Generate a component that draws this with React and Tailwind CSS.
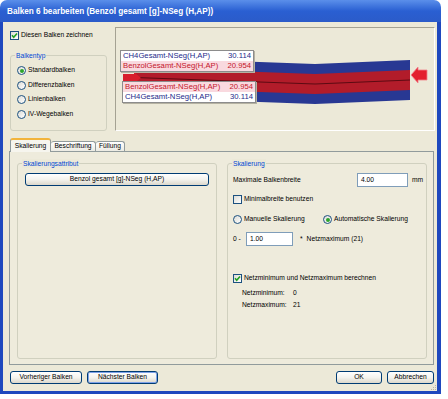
import React from 'react'

const font = "font-['Liberation_Sans',Arial,sans-serif]"

function Check({ checked }) {
  return (
    <span className="w-[9px] h-[9px] border border-[#1C5180] bg-linear-to-br from-[#DCDCD7] to-white flex items-center justify-center shrink-0">
      {checked && (
        <svg width="7" height="7" viewBox="0 0 7 7">
          <path d="M1 3.3 L2.7 5.2 L6 1.4" stroke="#21A121" strokeWidth="1.6" fill="none" />
        </svg>
      )}
    </span>
  )
}

function Radio({ checked }) {
  return (
    <span className="w-[9px] h-[9px] rounded-full border border-[#1C5180] bg-linear-to-br from-[#DCDCD7] to-white flex items-center justify-center shrink-0">
      {checked && <span className="w-[4px] h-[4px] rounded-full bg-[#2CA52C]" />}
    </span>
  )
}

function Group({ label, className = '', children }) {
  return (
    <div className={`relative border border-[#D0D0BF] rounded-[3px] ${className}`}>
      <span className="absolute top-[-5px] left-[4px] px-[1px] bg-[#ECE9D8] text-[#0046D5] leading-[9px]">{label}</span>
      {children}
    </div>
  )
}

function Button({ children, width, isDefault }) {
  return (
    <div
      className={`${width} h-[13px] rounded-[3px] border border-[#003C74] bg-linear-to-b from-white via-[#F4F3EE] to-[#DCD8CC] flex items-center justify-center leading-none ${
        isDefault ? 'shadow-[inset_0_0_0_1px_#7FA2E8]' : ''
      }`}
    >
      {children}
    </div>
  )
}

function RadioRow({ checked, children }) {
  return (
    <div className="flex items-center gap-[2px] h-[9px] leading-none">
      <Radio checked={checked} />
      <span>{children}</span>
    </div>
  )
}

function Label({ className, rows }) {
  return (
    <div className={`absolute w-[134px] h-[22px] border border-[#8C8C8C] bg-white shadow-[1px_1px_0_#B5B2A2] ${className}`}>
      {rows.map((r, i) => (
        <div
          key={i}
          className={`h-[10px] flex items-center justify-between px-[2px] text-[7.7px] leading-none ${
            r.red ? 'bg-[#F9D9DF] text-[#C4162A]' : 'text-[#1C2A8A]'
          }`}
        >
          <span>{r.name}</span>
          <span>{r.value}</span>
        </div>
      ))}
    </div>
  )
}

function Preview() {
  return (
    <div className="relative mt-[5px] w-[320px] h-[104px] border-t border-l border-[#A5A293] border-b-white border-r-white border-b border-r bg-[#ECE9D8] overflow-hidden">
      <svg className="absolute left-0 top-0" width="320" height="104" viewBox="0 0 320 104">
        <polygon points="19,29.5 199,36 294,32 294,72 199,76 19,69.5" fill="#283893" />
        <polygon points="19,39.5 199,46 294,42 294,62 199,66 19,59.5" fill="#B21C2A" />
        <polyline points="19,49.5 199,56 294,52" fill="none" stroke="#5C0A12" strokeWidth="1" />
        <polygon points="295,47 302,39 302,42 311,42 311,52 302,52 302,55" fill="#E3202E" stroke="#F3808C" strokeWidth="0.8" />
        <polygon points="7,46 18,46 18,44 25,50 18,55 18,54 7,54" fill="#D81E2C" />
      </svg>
      <Label
        className="left-[4px] top-[22px]"
        rows={[
          { name: 'CH4Gesamt-NSeg(H,AP)', value: '30.114' },
          { name: 'BenzolGesamt-NSeg(H,AP)', value: '20.954', red: true },
        ]}
      />
      <Label
        className="left-[6px] top-[53px]"
        rows={[
          { name: 'BenzolGesamt-NSeg(H,AP)', value: '20.954', red: true },
          { name: 'CH4Gesamt-NSeg(H,AP)', value: '30.114' },
        ]}
      />
    </div>
  )
}

export default function App() {
  return (
    <div className={`w-[448px] h-[399px] bg-white ${font} text-[6.7px] text-black`}>
      <div className="w-[441px] h-[394px] flex flex-col rounded-t-[7px] overflow-hidden">
        <div className="h-[22px] shrink-0 bg-linear-to-b from-[#5B8FEA] via-[#2A5FD2] to-[#2B5BC9] flex items-center pl-[7px] text-white font-bold text-[9.5px]">
          <span className="inline-block whitespace-nowrap origin-left scale-x-[0.86]">
            Balken 6 bearbeiten (Benzol gesamt [g]-NSeg (H,AP))
          </span>
        </div>

        <div className="relative flex-1 bg-[#ECE9D8] border-l-[3px] border-r-[4px] border-b-[3px] border-[#1E48BE] flex flex-col">
          <div className="flex h-[111px] shrink-0">
            <div className="w-[112px] pl-[7px] pt-[9px] flex flex-col">
              <div className="flex items-center gap-[2px] h-[9px] leading-none">
                <Check checked />
                <span>Diesen Balken zeichnen</span>
              </div>
              <Group label="Balkentyp" className="mt-[15px] w-[97px] h-[76px] pl-[6px] pt-[10px] flex flex-col gap-[5.5px]">
                <RadioRow checked>Standardbalken</RadioRow>
                <RadioRow>Differenzbalken</RadioRow>
                <RadioRow>Linienbalken</RadioRow>
                <RadioRow>IV-Wegebalken</RadioRow>
              </Group>
            </div>
            <Preview />
          </div>

          <div className="flex items-end pl-[7px] mt-[5px] h-[13px] shrink-0 relative z-10 leading-none">
            <div className="w-[41px] h-[14px] mb-[-1px] rounded-t-[3px] border-t-2 border-t-[#F2B43C] border-x border-x-[#919B9C] bg-[#F6F5EE] flex items-center justify-center">
              Skalierung
            </div>
            <div className="w-[45px] h-[10px] rounded-t-[3px] border-t border-r border-[#919B9C] bg-linear-to-b from-white to-[#ECEBE3] flex items-center justify-center">
              Beschriftung
            </div>
            <div className="w-[29px] h-[10px] rounded-t-[3px] border-t border-r border-[#919B9C] bg-linear-to-b from-white to-[#ECEBE3] flex items-center justify-center">
              Füllung
            </div>
          </div>

          <div className="ml-[6px] mr-[3px] h-[214px] shrink-0 border border-[#919B9C] bg-[#EEEBDC] flex gap-[10px] pl-[7px] pr-[6px] pt-[11px] pb-[5px]">
            <Group label="Skalierungsattribut" className="w-[200px] h-full pl-[7px] pt-[9px]">
              <Button width="w-[184px]">Benzol gesamt [g]-NSeg (H,AP)</Button>
            </Group>

            <Group label="Skalierung" className="w-[200px] h-full pl-[5px] pt-[9px] flex flex-col">
              <div className="flex items-center h-[14px]">
                <span className="w-[124px]">Maximale Balkenbreite</span>
                <div className="w-[51px] h-[14px] border border-[#7F9DB9] bg-white flex items-center pl-[3px] leading-none">4.00</div>
                <span className="ml-[4px]">mm</span>
              </div>
              <div className="flex items-center gap-[2px] h-[9px] mt-[8px] leading-none">
                <Check />
                <span>Minimalbreite benutzen</span>
              </div>
              <div className="flex items-center h-[9px] mt-[11px]">
                <div className="w-[90px]">
                  <RadioRow>Manuelle Skalierung</RadioRow>
                </div>
                <RadioRow checked>Automatische Skalierung</RadioRow>
              </div>
              <div className="flex items-center h-[14px] mt-[8px]">
                <span className="w-[13px]">0 -</span>
                <div className="w-[47px] h-[14px] border border-[#7F9DB9] bg-white flex items-center pl-[3px] leading-none">1.00</div>
                <span className="ml-[7px]">*</span>
                <span className="ml-[4px]">Netzmaximum (21)</span>
              </div>
              <div className="flex items-center gap-[2px] h-[9px] mt-[28px] leading-none">
                <Check checked />
                <span>Netzminimum und Netzmaximum berechnen</span>
              </div>
              <div className="flex items-center h-[10px] mt-[5px] pl-[9px]">
                <span className="w-[51px]">Netzminimum:</span>
                <span>0</span>
              </div>
              <div className="flex items-center h-[10px] mt-[2px] pl-[9px]">
                <span className="w-[51px]">Netzmaximum:</span>
                <span>21</span>
              </div>
            </Group>
          </div>

          <div className="flex gap-[5px] pl-[7px] pr-[3px] mt-[6px] h-[13px] shrink-0">
            <Button width="w-[72px]">Vorheriger Balken</Button>
            <Button width="w-[71px]" isDefault>Nächster Balken</Button>
            <div className="ml-auto flex gap-[5px]">
              <Button width="w-[46px]">OK</Button>
              <Button width="w-[47px]">Abbrechen</Button>
            </div>
          </div>

          {/* resize grip */}
          <svg className="absolute right-[0px] bottom-[0px]" width="6" height="6" viewBox="0 0 6 6">
            <rect x="4" y="0" width="1" height="1" fill="#B8B4A4" />
            <rect x="2" y="2" width="1" height="1" fill="#B8B4A4" />
            <rect x="4" y="2" width="1" height="1" fill="#B8B4A4" />
            <rect x="0" y="4" width="1" height="1" fill="#B8B4A4" />
            <rect x="2" y="4" width="1" height="1" fill="#B8B4A4" />
            <rect x="4" y="4" width="1" height="1" fill="#B8B4A4" />
          </svg>
        </div>
      </div>
    </div>
  )
}
